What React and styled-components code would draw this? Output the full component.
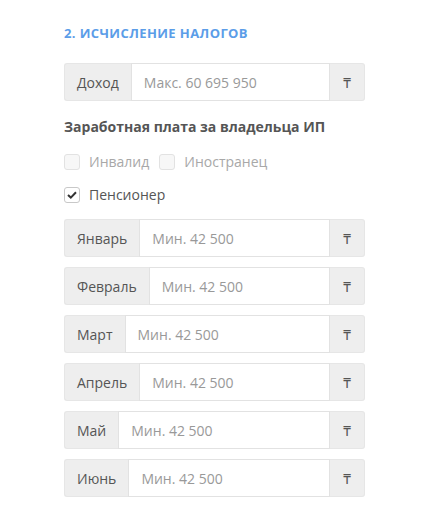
import React from "react";
import styled, { createGlobalStyle } from "styled-components";

const Global = createGlobalStyle`
  body { margin: 0; background: #fff; font-family: "Open Sans", "Noto Sans", sans-serif; }
  * { box-sizing: border-box; }
`;

const Page = styled.div`
  padding: 24px 61px 0 64px;
  width: 426px;
`;

const Heading = styled.h3`
  margin: 0 0 21px;
  font-size: 13px;
  font-weight: 700;
  line-height: 18px;
  color: #5b9de8;
  text-transform: uppercase;
  letter-spacing: 0.4px;
`;

const Group = styled.div`
  display: flex;
  height: 38px;
  margin-bottom: ${(p) => p.$mb ?? 10}px;
`;

const Addon = styled.span`
  display: flex;
  align-items: center;
  padding: 0 12px;
  background: #eeeeee;
  border: 1px solid #e6e6e6;
  color: #555;
  font-size: 14px;
  white-space: nowrap;
  border-radius: ${(p) => (p.$right ? "0 3px 3px 0" : "3px 0 0 3px")};
  ${(p) => (p.$right ? "border-left: 0; width: 35px; justify-content: center; padding: 0;" : "border-right: 0;")}
`;

const Input = styled.input`
  flex: 1;
  min-width: 0;
  border: 1px solid #e2e2e2;
  padding: 0 12px;
  font-family: inherit;
  font-size: 14px;
  color: #555;
  outline: none;
  &::placeholder { color: #999; }
`;

const Sub = styled.div`
  font-size: 14px;
  font-weight: 700;
  color: #555;
  line-height: 20px;
  margin-bottom: 15px;
`;

const CheckRow = styled.div`
  display: flex;
  gap: 10px;
  margin-bottom: ${(p) => p.$mb}px;
`;

const CheckLabel = styled.label`
  display: flex;
  align-items: center;
  gap: 9px;
  font-size: 14px;
  line-height: 20px;
  color: ${(p) => (p.$disabled ? "#a8a8a8" : "#555")};
`;

const Box = styled.span`
  width: 16px;
  height: 16px;
  border: 1px solid ${(p) => (p.$disabled ? "#e2e2e2" : "#c8c8c8")};
  background: ${(p) => (p.$disabled ? "#f7f7f7" : "#fff")};
  border-radius: 3px;
  display: flex;
  align-items: center;
  justify-content: center;
`;

const Tenge = () => <Addon $right>₸</Addon>;

const months = ["Январь", "Февраль", "Март", "Апрель", "Май", "Июнь"];

export default function App() {
  return (
    <Page>
      <Global />
      <Heading>2. Исчисление налогов</Heading>
      <Group $mb={16}>
        <Addon>Доход</Addon>
        <Input placeholder="Макс. 60 695 950" />
        <Tenge />
      </Group>
      <Sub>Заработная плата за владельца ИП</Sub>
      <CheckRow $mb={13}>
        <CheckLabel $disabled>
          <Box $disabled />
          Инвалид
        </CheckLabel>
        <CheckLabel $disabled>
          <Box $disabled />
          Иностранец
        </CheckLabel>
      </CheckRow>
      <CheckRow $mb={14}>
        <CheckLabel>
          <Box>
            <svg width="10" height="8" viewBox="0 0 10 8">
              <path d="M1 4 L3.8 6.6 L9 1.3" fill="none" stroke="#333" strokeWidth="2" />
            </svg>
          </Box>
          Пенсионер
        </CheckLabel>
      </CheckRow>
      {months.map((m) => (
        <Group key={m}>
          <Addon>{m}</Addon>
          <Input placeholder="Мин. 42 500" />
          <Tenge />
        </Group>
      ))}
    </Page>
  );
}
